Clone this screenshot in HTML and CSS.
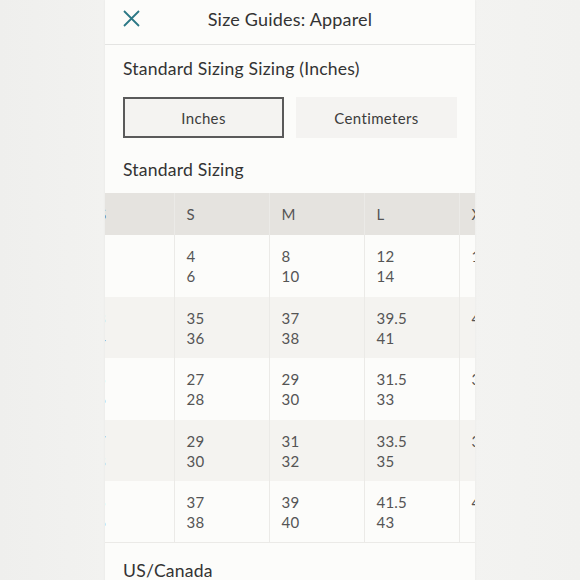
FILE: index.html
```html
<!DOCTYPE html>
<html lang="en">
<head>
<meta charset="utf-8">
<title>Size Guides: Apparel</title>
<link rel="stylesheet" href="styles.css">
</head>
<body>
<div class="panel">
  <header class="topbar">
    <button class="close" aria-label="Close">
      <svg width="17" height="17" viewBox="0 0 17 17"><path d="M1 1 L16 16 M16 1 L1 16" stroke="#2b7886" stroke-width="1.8" fill="none"/></svg>
    </button>
    <h1 class="title">Size Guides: Apparel</h1>
    <span></span>
  </header>
  <div class="content">
    <h2 class="heading first">Standard Sizing Sizing (Inches)</h2>
    <div class="toggle">
      <button class="unit active">Inches</button>
      <button class="unit">Centimeters</button>
    </div>
    <h2 class="heading second">Standard Sizing</h2>
  </div>
  <div class="scroller">
    <table class="sizes">
      <thead>
        <tr><th>XS</th><th>S</th><th>M</th><th>L</th><th>XL</th></tr>
      </thead>
      <tbody>
        <tr><td>0<br>2</td><td>4<br>6</td><td>8<br>10</td><td>12<br>14</td><td>16</td></tr>
        <tr class="alt"><td>33<br>34</td><td>35<br>36</td><td>37<br>38</td><td>39.5<br>41</td><td>43</td></tr>
        <tr><td>25<br>26</td><td>27<br>28</td><td>29<br>30</td><td>31.5<br>33</td><td>35</td></tr>
        <tr class="alt"><td>27<br>28</td><td>29<br>30</td><td>31<br>32</td><td>33.5<br>35</td><td>37</td></tr>
        <tr><td>35<br>36</td><td>37<br>38</td><td>39<br>40</td><td>41.5<br>43</td><td>45</td></tr>
      </tbody>
    </table>
  </div>
  <div class="content">
    <h2 class="heading third">US/Canada</h2>
  </div>
</div>
</body>
</html>
```
FILE: styles.css
```css
html, body {
  margin: 0;
  padding: 0;
}
body {
  background: linear-gradient(90deg, #efefed 0%, #f4f4f2 30%, #f4f4f2 70%, #f1f1ef 100%);
  font-family: "Lato", "Noto Sans", sans-serif;
  color: #333;
  height: 580px;
  overflow: hidden;
}
.panel {
  width: 370px;
  margin: 0 auto;
  background: #fcfcfa;
  min-height: 580px;
  box-shadow: 0 0 2px rgba(0,0,0,0.06);
}
.topbar {
  height: 44px;
  border-bottom: 1px solid #e4e4e2;
  display: grid;
  grid-template-columns: 1fr auto 1fr;
  align-items: center;
  padding: 0 18px;
}
.close {
  background: none;
  border: 0;
  padding: 0;
  width: 17px;
  height: 17px;
  margin-top: -8px;
  display: block;
}
.close svg { display: block; }
.title {
  margin: 0;
  font-size: 18px;
  font-weight: 400;
  color: #333;
  letter-spacing: 0.2px;
  margin-top: -7px;
}
.content {
  padding: 0 18px;
}
.heading {
  margin: 0;
  font-size: 17.6px;
  font-weight: 400;
  line-height: 24px;
  color: #333;
  letter-spacing: 0.2px;
}
.heading.first { padding-top: 12px; }
.heading.second { margin-top: 20px; margin-bottom: 11px; }
.heading.third { margin-top: 16px; }
.toggle {
  display: grid;
  grid-template-columns: 1fr 1fr;
  gap: 12px;
  margin-top: 16px;
}
.unit {
  height: 41px;
  background: #f4f3f1;
  border: 2px solid transparent;
  font-family: inherit;
  font-size: 15px;
  color: #3c3c3c;
  letter-spacing: 0.35px;
  padding: 0;
}
.unit.active {
  border-color: #5a5a5a;
}
.scroller {
  overflow: hidden;
  width: 370px;
}
.sizes {
  border-collapse: collapse;
  margin-left: -26px;
  table-layout: fixed;
  width: 475px;
  border-bottom: 1px solid #ebeae7;
}
.sizes th, .sizes td {
  width: 95px;
  box-sizing: border-box;
  text-align: left;
  padding: 0 12px;
  font-size: 15px;
  font-weight: 400;
  color: #555;
  border-left: 1px solid #ebeae7;
  vertical-align: top;
  letter-spacing: 0.2px;
}
.sizes th:first-child, .sizes td:first-child {
  border-left: 0;
  padding-left: 9px;
}
.sizes thead tr {
  background: #e5e3df;
  height: 42px;
}
.sizes th {
  vertical-align: middle;
}
.sizes td {
  line-height: 20px;
  padding-top: 11px;
  padding-bottom: 10px;
  height: 61.5px;
}
.sizes tbody tr { background: #fcfcfa; }
.sizes tbody tr.alt { background: #f4f3f0; }
```
